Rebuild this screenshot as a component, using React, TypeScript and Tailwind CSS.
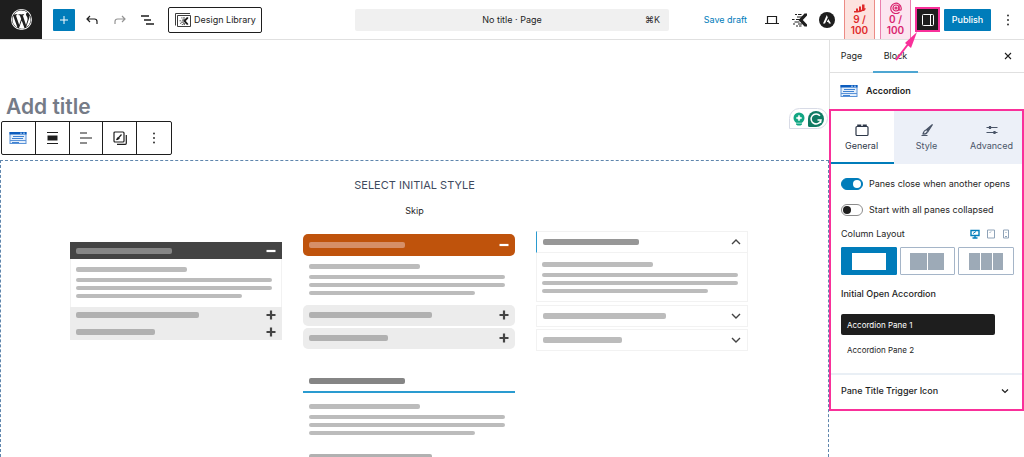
import { useState } from 'react';
import type { ReactNode } from 'react';
import clsx from 'clsx';

const COLUMN_LAYOUTS = [1, 2, 3];
const PANES = ['Accordion Pane 1', 'Accordion Pane 2'];

function WordPressLogo() {
  return (
    <svg viewBox="1.6 1.6 20.8 20.8" className="size-[21px]" fill="#fff">
      <path d="M12.16 12.87l-2.7 7.84a9 9 0 0 0 5.53-.14l-.06-.13-2.77-7.57zM3 12a9 9 0 0 0 5.07 8.1L3.78 8.34A9 9 0 0 0 3 12zm15.06-.45c0-1.12-.4-1.9-.75-2.5-.45-.75-.89-1.37-.89-2.11 0-.83.63-1.6 1.52-1.6h.11a9 9 0 0 0-13.6 1.7h.58c.94 0 2.4-.12 2.4-.12.48-.03.54.69.05.75 0 0-.49.05-1.03.08l3.28 9.76 1.97-5.91-1.4-3.85c-.49-.03-.95-.08-.95-.08-.48-.03-.43-.78.06-.75 0 0 1.48.12 2.37.12.94 0 2.4-.12 2.4-.12.48-.03.54.69.06.75 0 0-.49.05-1.03.08l3.26 9.69.93-2.95c.45-1.21.66-2.15.66-2.94zm1.84-3.87a9 9 0 0 1-3.37 12.1l2.75-7.95c.51-1.28.68-2.31.68-3.22 0-.33-.02-.64-.06-.93z" />
      <path d="M12 1.6A10.4 10.4 0 1 0 22.4 12 10.4 10.4 0 0 0 12 1.6zm0 20A9.6 9.6 0 1 1 21.6 12 9.6 9.6 0 0 1 12 21.6z" />
    </svg>
  );
}

/** Blue block icon shared by the toolbar and the sidebar card. */
function AccordionIcon() {
  return (
    <svg viewBox="0 0 18 14" className="h-[14px] w-[18px]" fill="none">
      <rect x="1" y="1.5" width="16" height="11" fill="#e3eefb" stroke="#5b93d8" />
      <rect x="0.5" y="1" width="17" height="2.5" fill="#0b5cbe" />
      <path d="M11 2.2h2M14 2.2h2" stroke="#a9cbf2" />
      <path d="M4 5.5h11M3 7.5h11" stroke="#3f82d2" />
      <path d="M1 9.5h16" stroke="#5b93d8" />
      <path d="M3 11.5h7" stroke="#3f82d2" />
    </svg>
  );
}

function KadenceMark() {
  return (
    <>
      <path
        d="M3 1.5h2M6 1.5h3.5M5 4h5.500M0 6.500h2.500M4 6.500h4M2.500 9h5M1 11h2M6 11h4M4 13h2M7 13h2.500"
        fill="none"
        stroke="#1e1e1e"
        strokeWidth="1.2"
      />
      <path d="M15 .5h-2.500L6.500 7l6 6.500H15v-2L10.800 7 15 2.500z" fill="#1e1e1e" />
    </>
  );
}

function KadenceIcon() {
  return (
    <svg viewBox="0 0 15 14" className="h-[14px] w-[15px]">
      <KadenceMark />
    </svg>
  );
}

function DesignLibraryIcon() {
  return (
    <svg viewBox="0 0 18 16" className="h-4 w-[18px]">
      <path d="M3.500 3.500h13v11h-13zM1.500 13.500v-12H16" fill="none" stroke="#3c3c3c" />
      <g transform="translate(5.500 5) scale(.58)">
        <KadenceMark />
      </g>
    </svg>
  );
}

function DotsIcon() {
  return (
    <svg viewBox="0 0 4 12" className="h-3 w-1" fill="#1e1e1e">
      <circle cx="2" cy="1.5" r=".9" />
      <circle cx="2" cy="6" r=".9" />
      <circle cx="2" cy="10.5" r=".9" />
    </svg>
  );
}

function SeoScore({ score, tone, icon }: { score: number; tone: string; icon: ReactNode }) {
  return (
    <button
      className={clsx(
        'flex h-[39px] w-[31px] flex-col items-center overflow-hidden border-x text-[10px] leading-[11px] font-semibold',
        tone,
      )}
    >
      {icon}
      <span>{score} /</span>
      <span>100</span>
    </button>
  );
}

function Header() {
  return (
    <header className="grid h-10 shrink-0 grid-cols-[1fr_314px_1fr] items-center border-b border-[#e0e0e0]">
      <div className="flex items-center">
        <a href="#" aria-label="View pages" className="flex h-[39px] w-[42px] items-center justify-center bg-[#1e1e1e]">
          <WordPressLogo />
        </a>
        <button aria-label="Add block" className="ml-[11px] flex size-[22px] items-center justify-center rounded-[1px] bg-[#007cba]">
          <svg viewBox="0 0 8 8" className="size-2" stroke="#fff">
            <path d="M4 0v8M0 4h8" />
          </svg>
        </button>
        <button aria-label="Undo" className="ml-[11px]">
          <svg viewBox="0 0 12 10" className="h-[10px] w-3" fill="none" stroke="#1e1e1e" strokeWidth="1.2">
            <path d="M4 1L1 4l3 3M1 4h7.500c1.500 0 2.500 1 2.500 2.500V9" />
          </svg>
        </button>
        <button aria-label="Redo" className="ml-4">
          <svg viewBox="0 0 12 10" className="h-[10px] w-3" fill="none" stroke="#949494" strokeWidth="1.2">
            <path d="M8 1l3 3-3 3M11 4H3.500C2 4 1 5 1 6.500V9" />
          </svg>
        </button>
        <button aria-label="Document overview" className="ml-[14px]">
          <svg viewBox="0 0 14 12" className="h-3 w-[14px]" fill="none" stroke="#1e1e1e" strokeWidth="1.3">
            <path d="M1 2h8M4 6h7M6 10h8" />
          </svg>
        </button>
        <button className="ml-[14px] flex h-[26px] w-[94px] items-center gap-[2px] rounded-[2px] border border-[#1e1e1e] pl-[5px] text-[9px] whitespace-nowrap">
          <DesignLibraryIcon />
          Design Library
        </button>
      </div>

      <button className="grid h-[22px] grid-cols-[1fr_auto_1fr] items-center rounded-[2px] bg-[#f0f0f0] px-[9px] text-[9px]">
        <span className="col-start-2">No title · Page</span>
        <span className="text-right text-[#2f2f2f]">⌘K</span>
      </button>

      <div className="flex items-center justify-end">
        <button className="text-[9px] whitespace-nowrap text-[#007cba]">Save draft</button>
        <button aria-label="Preview" className="ml-[18px]">
          <svg viewBox="0 0 14 10" className="h-[10px] w-[14px]" fill="none" stroke="#1e1e1e" strokeWidth="1.2">
            <path d="M2.500 8V1.500h9V8M0 8.500h14" />
          </svg>
        </button>
        <button aria-label="Kadence" className="ml-[13px]">
          <KadenceIcon />
        </button>
        <button aria-label="Astra" className="ml-3">
          <svg viewBox="0 0 16 16" className="size-4">
            <circle cx="8" cy="8" r="8" fill="#1e1e1e" />
            <path d="M7.800 3L4 11.500h2L8.800 5.500zM9.300 7L7.800 10h1.500l.6 1.500H12z" fill="#fff" />
          </svg>
        </button>
        <div className="ml-[9px] flex gap-[5px]">
          <SeoScore
            score={9}
            tone="border-[#ec8b85] bg-[#fde3df] text-[#df2b2b]"
            icon={
              <svg viewBox="0 0 12 14" className="h-[14px] w-3 shrink-0" fill="#df2b2b">
                <path d="M2 8.500h2V11H2zM5 6.500h2V11H5zM8 4.500h2.500V11H8z" />
                <path d="M0 12.500v-1.500c4 0 7-.5 11-3l1 1c-4 3-7 3.500-12 3.500z" />
              </svg>
            }
          />
          <SeoScore
            score={0}
            tone="border-[#ea7fae] bg-[#fce5f0] text-[#d9246f]"
            icon={
              <svg viewBox="0 0 12 14" className="h-[14px] w-3 shrink-0" fill="none" stroke="#d9246f" strokeWidth="1.2">
                <path d="M9.500 12.300A5.200 5.200 0 1 1 11.200 8v1.200c0 1.300-2.200 1.300-2.200 0V5.500" />
                <circle cx="6" cy="8" r="3" />
                <circle cx="6" cy="8" r="1" />
              </svg>
            }
          />
        </div>
        <button aria-label="Settings" className="relative ml-1 flex size-[25px] items-center justify-center border-2 border-[#f9309a] bg-[#1e1e1e]">
          <svg viewBox="0 0 12 12" className="size-3" fill="none" stroke="#fff">
            <rect x="0.5" y="0.5" width="11" height="11" rx="1" />
            <path d="M8.500 1v10" />
          </svg>
          <svg viewBox="0 0 26 32" className="pointer-events-none absolute top-[21px] right-[19px] z-20 h-8 w-[26px]">
            <path d="M3 30L16 13" stroke="#f9309a" strokeWidth="2" />
            <path d="M24 2L12 13l6 5z" fill="#f9309a" />
          </svg>
        </button>
        <button className="ml-1 h-[22px] w-[47px] rounded-[1px] bg-[#007cba] text-[9px] font-medium text-white">Publish</button>
        <button aria-label="Options" className="mr-[14px] ml-[15px]">
          <DotsIcon />
        </button>
      </div>
    </header>
  );
}

function Bar({ className }: { className: string }) {
  return <span className={clsx('block rounded-[2px]', className)} />;
}

function PaneText() {
  return (
    <span className="block">
      <Bar className="h-[5px] w-[111px] bg-[#bcbcbc]" />
      <Bar className="mt-[6px] h-1 w-[196px] bg-[#bcbcbc]" />
      <Bar className="mt-1 h-1 w-[196px] bg-[#bcbcbc]" />
      <Bar className="mt-1 h-1 w-[166px] bg-[#bcbcbc]" />
    </span>
  );
}

function Sign({ kind, light = false }: { kind: 'minus' | 'plus' | 'up' | 'down'; light?: boolean }) {
  const paths = { minus: 'M0.500 5h9', plus: 'M0.500 5h9M5 .5v9', up: 'M1 7l4-4 4 4', down: 'M1 3l4 4 4-4' };
  return (
    <svg
      viewBox="0 0 10 10"
      className="size-[10px]"
      fill="none"
      stroke={light ? '#fff' : '#444'}
      strokeWidth={kind === 'up' || kind === 'down' ? 1.4 : 2.2}
    >
      <path d={paths[kind]} />
    </svg>
  );
}

function StylePicker() {
  const row = 'flex items-center justify-between px-[6px]';
  return (
    <div className="mt-3 grid grid-cols-3 items-center gap-x-[21px] gap-y-5 pr-[80px] pl-[69px]">
      <button aria-label="Dark style">
        <span className={clsx(row, 'h-[17px] bg-[#444]')}>
          <Bar className="h-[6px] w-24 bg-[#868686]" />
          <Sign kind="minus" light />
        </span>
        <span className="block h-12 border-x border-[#f2f2f2] px-[5px] pt-2">
          <PaneText />
        </span>
        <span className={clsx(row, 'h-4 bg-[#ececec]')}>
          <Bar className="h-[6px] w-[123px] bg-[#b1b1b1]" />
          <Sign kind="plus" />
        </span>
        <span className={clsx(row, 'h-[17px] bg-[#ececec]')}>
          <Bar className="h-[6px] w-[79px] bg-[#b1b1b1]" />
          <Sign kind="plus" />
        </span>
      </button>

      <button aria-label="Rounded style">
        <span className={clsx(row, 'h-[22px] rounded-[5px] bg-[#bf530c]')}>
          <Bar className="h-[6px] w-24 bg-[#d68f68]" />
          <Sign kind="minus" light />
        </span>
        <span className="block h-[49px] px-[6px] pt-2">
          <PaneText />
        </span>
        <span className={clsx(row, 'h-[21px] rounded-[5px] bg-[#ececec]')}>
          <Bar className="h-[6px] w-[123px] bg-[#b1b1b1]" />
          <Sign kind="plus" />
        </span>
        <span className={clsx(row, 'mt-[2px] h-[21px] rounded-[5px] bg-[#ececec]')}>
          <Bar className="h-[6px] w-[79px] bg-[#b1b1b1]" />
          <Sign kind="plus" />
        </span>
      </button>

      <button aria-label="Outlined style">
        <span className={clsx(row, 'h-[22px] border border-[#f2f2f2] border-l-[#2a9bd0]')}>
          <Bar className="h-[6px] w-24 bg-[#979797]" />
          <Sign kind="up" />
        </span>
        <span className="block h-[49px] border border-t-0 border-[#f2f2f2] px-[5px] pt-[9px]">
          <PaneText />
        </span>
        <span className={clsx(row, 'mt-[3px] h-[22px] border border-[#f2f2f2]')}>
          <Bar className="h-[6px] w-[123px] bg-[#bcbcbc]" />
          <Sign kind="down" />
        </span>
        <span className={clsx(row, 'mt-[2px] h-[22px] border border-[#f2f2f2]')}>
          <Bar className="h-[6px] w-[79px] bg-[#bcbcbc]" />
          <Sign kind="down" />
        </span>
      </button>

      <button aria-label="Underlined style" className="col-start-2">
        <span className={clsx(row, 'h-[22px] border-b-2 border-[#2a9bd0]')}>
          <Bar className="h-[6px] w-24 bg-[#858585]" />
        </span>
        <span className="block h-[57px] px-[6px] pt-[11px]">
          <PaneText />
        </span>
        <span className={clsx(row, 'h-[14px]')}>
          <Bar className="h-[6px] w-[123px] bg-[#b1b1b1]" />
        </span>
      </button>
    </div>
  );
}

function BlockToolbar() {
  const cell = 'flex w-[34px] items-center justify-center';
  return (
    <div role="toolbar" className="ml-px flex h-[34px] w-[171px] shrink-0 divide-x divide-[#1e1e1e] rounded-[2px] border border-[#1e1e1e]">
      <button aria-label="Accordion" className={cell}>
        <AccordionIcon />
      </button>
      <button aria-label="Align" className={cell}>
        <svg viewBox="0 0 11 12" className="h-3 w-[11px]" stroke="#1e1e1e">
          <path d="M0 0.500h11M0 11.500h11" />
          <path d="M0.500 6h10" strokeWidth="5" />
        </svg>
      </button>
      <button aria-label="Text alignment" className={cell}>
        <svg viewBox="0 0 12 12" className="size-3" stroke="#1e1e1e" strokeWidth="1.2">
          <path d="M0 1h7M0 6h12M0 11h7" />
        </svg>
      </button>
      <button aria-label="Copy styles" className={cell}>
        <svg viewBox="0 0 14 14" className="size-[14px]" fill="none" stroke="#1e1e1e" strokeWidth="1.2">
          <rect x="1" y="1" width="10" height="10" rx="1" />
          <path d="M13.300 4v8.300a1 1 0 0 1-1 1H4M4 8.500L8.500 3.500" />
          <path d="M3.500 8.800l1.500-2 .9.800z" fill="#1e1e1e" />
        </svg>
      </button>
      <button aria-label="Options" className={cell}>
        <DotsIcon />
      </button>
    </div>
  );
}

function Editor() {
  return (
    <main className="relative flex min-w-0 flex-1 flex-col">
      <input
        aria-label="Add title"
        placeholder="Add title"
        className="mt-[53px] h-7 shrink-0 pl-[6px] text-[21px] font-semibold outline-none placeholder:text-[#757b87]"
      />
      <BlockToolbar />
      <section className="mt-[5px] min-h-0 flex-1 border border-b-0 border-dashed border-[#5f86ad] pt-4 text-center">
        <h2 className="text-[11px] leading-4 text-[#3f4a5e]">SELECT INITIAL STYLE</h2>
        <button className="mt-[10px] block w-full text-[9px] leading-4">Skip</button>
        <StylePicker />
      </section>

      <div className="absolute top-[68px] right-px flex h-[21px] w-[39px] items-center justify-center gap-[3px] rounded-full rounded-bl-[3px] border border-[#d8dbe6] bg-white">
        <svg viewBox="0 0 12 14" className="h-[14px] w-3">
          <circle cx="6" cy="6" r="5.5" fill="#11a683" />
          <path d="M3 10h6v2.500l-1.500 1h-3L3 12.500z" fill="#11a683" />
          <path d="M6 3l.9 2.100L9 6l-2.100.9L6 9l-.9-2.100L3 6l2.100-.9z" fill="#fff" stroke="#fff" strokeWidth=".5" />
          <path d="M3 11.200h6" stroke="#fff" strokeWidth=".6" />
        </svg>
        <svg viewBox="0 0 16 16" className="size-4">
          <path d="M8 0a8 8 0 1 1 0 16H1.500A1.500 1.500 0 0 1 0 14.500V8a8 8 0 0 1 8-8z" fill="#0f7a63" />
          <path d="M12 4.800A5 5 0 1 0 13 9H9.500M13 9l-.5 3" fill="none" stroke="#fff" strokeWidth="1.5" />
        </svg>
      </div>
    </main>
  );
}

function SettingTab({ label, active, onClick, children }: { label: string; active: boolean; onClick: () => void; children: ReactNode }) {
  return (
    <button
      role="tab"
      aria-selected={active}
      onClick={onClick}
      className={clsx(
        'flex h-[55px] flex-1 flex-col items-center gap-[1px] border-b-2 pt-[14px] text-[9px] leading-4',
        active ? 'border-[#007cba] text-[#2d3748]' : 'border-[#ecf0f8] bg-[#ecf0f8] text-[#4a5568]',
      )}
    >
      <svg viewBox="0 0 14 14" className="size-[14px]" fill="none" stroke="currentColor" strokeWidth="1.2">
        {children}
      </svg>
      {label}
    </button>
  );
}

function Toggle({ label, defaultChecked = false }: { label: string; defaultChecked?: boolean }) {
  return (
    <label className="flex h-4 items-center gap-[6px] text-[9px] whitespace-nowrap">
      <input
        type="checkbox"
        defaultChecked={defaultChecked}
        className="flex h-3 w-[22px] shrink-0 appearance-none items-center rounded-full border border-[#8c8c8c] bg-white px-px before:size-2 before:rounded-full before:bg-[#1e1e1e] checked:justify-end checked:border-[#007cba] checked:bg-[#007cba] checked:before:bg-white"
      />
      {label}
    </label>
  );
}

function Sidebar() {
  const [tab, setTab] = useState('General');
  const [columns, setColumns] = useState(1);
  const [pane, setPane] = useState(PANES[0]);

  return (
    <aside className="w-[195px] shrink-0 bg-white">
      <div className="flex h-[33px] items-stretch border-b border-l border-[#e0e0e0] text-[9px]">
        <button className="w-[43px]">Page</button>
        <button className="-mb-px w-[45px] border-b-2 border-[#4ea6d2]">Block</button>
        <button aria-label="Close settings" className="mr-3 ml-auto">
          <svg viewBox="0 0 8 8" className="size-2" stroke="#1e1e1e" strokeWidth="1.1">
            <path d="M1 1l6 6M7 1L1 7" />
          </svg>
        </button>
      </div>
      <div className="flex h-9 items-center gap-2 border-l border-[#e0e0e0] pl-[10px]">
        <AccordionIcon />
        <h2 className="text-[9px] font-semibold">Accordion</h2>
      </div>

      {/* Highlight frame is drawn over the panel so the tabs keep the full width */}
      <div className="relative after:pointer-events-none after:absolute after:inset-0 after:border-2 after:border-[#f9309a]">
        <div role="tablist" className="flex">
          <SettingTab label="General" active={tab === 'General'} onClick={() => setTab('General')}>
            <rect x="1" y="3.5" width="12" height="9" rx="1" />
            <path d="M3 3V2.300h2.500V3M8.500 3V2.300H11V3" strokeWidth="1.6" />
          </SettingTab>
          <SettingTab label="Style" active={tab === 'Style'} onClick={() => setTab('Style')}>
            <path d="M12.500 1.500L6.500 6.500 8 8.500z" fill="currentColor" />
            <path d="M6 7c-2 .5-2.500 2-3 4 2 .2 4-.5 4.500-2.500M1.500 12.500h6" />
          </SettingTab>
          <SettingTab label="Advanced" active={tab === 'Advanced'} onClick={() => setTab('Advanced')}>
            <path d="M1.500 4.500h11M1.500 9.500h11" />
            <path d="M5 3v3M9.500 8v3" strokeWidth="2.2" />
          </SettingTab>
        </div>

        <div className="pr-[10px] pl-3 pt-3">
          <Toggle label="Panes close when another opens" defaultChecked />
          <div className="h-[10px]" />
          <Toggle label="Start with all panes collapsed" />

          <div className="mt-2 flex h-4 items-center text-[9px]">
            <h3>Column Layout</h3>
            <div className="mr-1 ml-auto flex items-center gap-[7px] text-[#8fa3b8]">
              <button aria-label="Desktop" className="text-[#007cba]">
                <svg viewBox="0 0 10 10" className="size-[10px]" fill="none" stroke="currentColor" strokeWidth="1.4">
                  <path d="M1 1.500h8v5H1zM5 7v2M2.500 9h5" />
                  <path d="M3 4.500L6 2.500" strokeWidth="1" />
                </svg>
              </button>
              <button aria-label="Tablet">
                <svg viewBox="0 0 8 10" className="h-[10px] w-2" fill="none" stroke="currentColor">
                  <path d="M.5 1h7v8h-7zM2.500 4L4 2.500" />
                </svg>
              </button>
              <button aria-label="Mobile">
                <svg viewBox="0 0 8 10" className="h-[10px] w-2" fill="none" stroke="currentColor">
                  <path d="M1.500 1h5v8h-5zM3 7.500h2M3.500 4l1-1" />
                </svg>
              </button>
            </div>
          </div>

          <div className="mt-[5px] grid grid-cols-3 gap-[3px]">
            {COLUMN_LAYOUTS.map((count) => (
              <button
                key={count}
                aria-label={`${count} columns`}
                aria-pressed={columns === count}
                onClick={() => setColumns(count)}
                className={clsx(
                  'flex h-7 items-center justify-center rounded-[1px] border',
                  columns === count ? 'border-[#007cba] bg-[#007cba] text-white' : 'border-[#a5b5c8] text-[#9daab7]',
                )}
              >
                <span className="flex h-[17px] w-[34px] gap-px">
                  {Array.from({ length: count }, (_, i) => (
                    <span key={i} className="flex-1 bg-current" />
                  ))}
                </span>
              </button>
            ))}
          </div>

          <h3 className="mt-[11px] text-[9px] leading-4 font-medium">Initial Open Accordion</h3>
          <div className="mt-3 flex w-[154px] flex-col gap-1 pb-[13px]">
            {PANES.map((name) => (
              <button
                key={name}
                onClick={() => setPane(name)}
                className={clsx(
                  'h-[21px] rounded-[2px] px-[6px] text-left text-[8px]',
                  pane === name && 'bg-[#1e1e1e] text-white',
                )}
              >
                {name}
              </button>
            ))}
          </div>
        </div>

        <button className="flex h-[38px] w-full items-center justify-between border-t-2 border-[#e9eff5] pr-[15px] pb-1 pl-3 text-[9px] font-medium">
          Pane Title Trigger Icon
          <svg viewBox="0 0 8 6" className="h-[6px] w-2" fill="none" stroke="#1e1e1e" strokeWidth="1.2">
            <path d="M1 1.500l3 3 3-3" />
          </svg>
        </button>
      </div>
    </aside>
  );
}

export default function App() {
  return (
    <div className="flex h-screen flex-col overflow-hidden bg-white font-['Inter',sans-serif] text-[#1e1e1e]">
      <Header />
      <div className="flex min-h-0 flex-1">
        <Editor />
        <Sidebar />
      </div>
    </div>
  );
}
